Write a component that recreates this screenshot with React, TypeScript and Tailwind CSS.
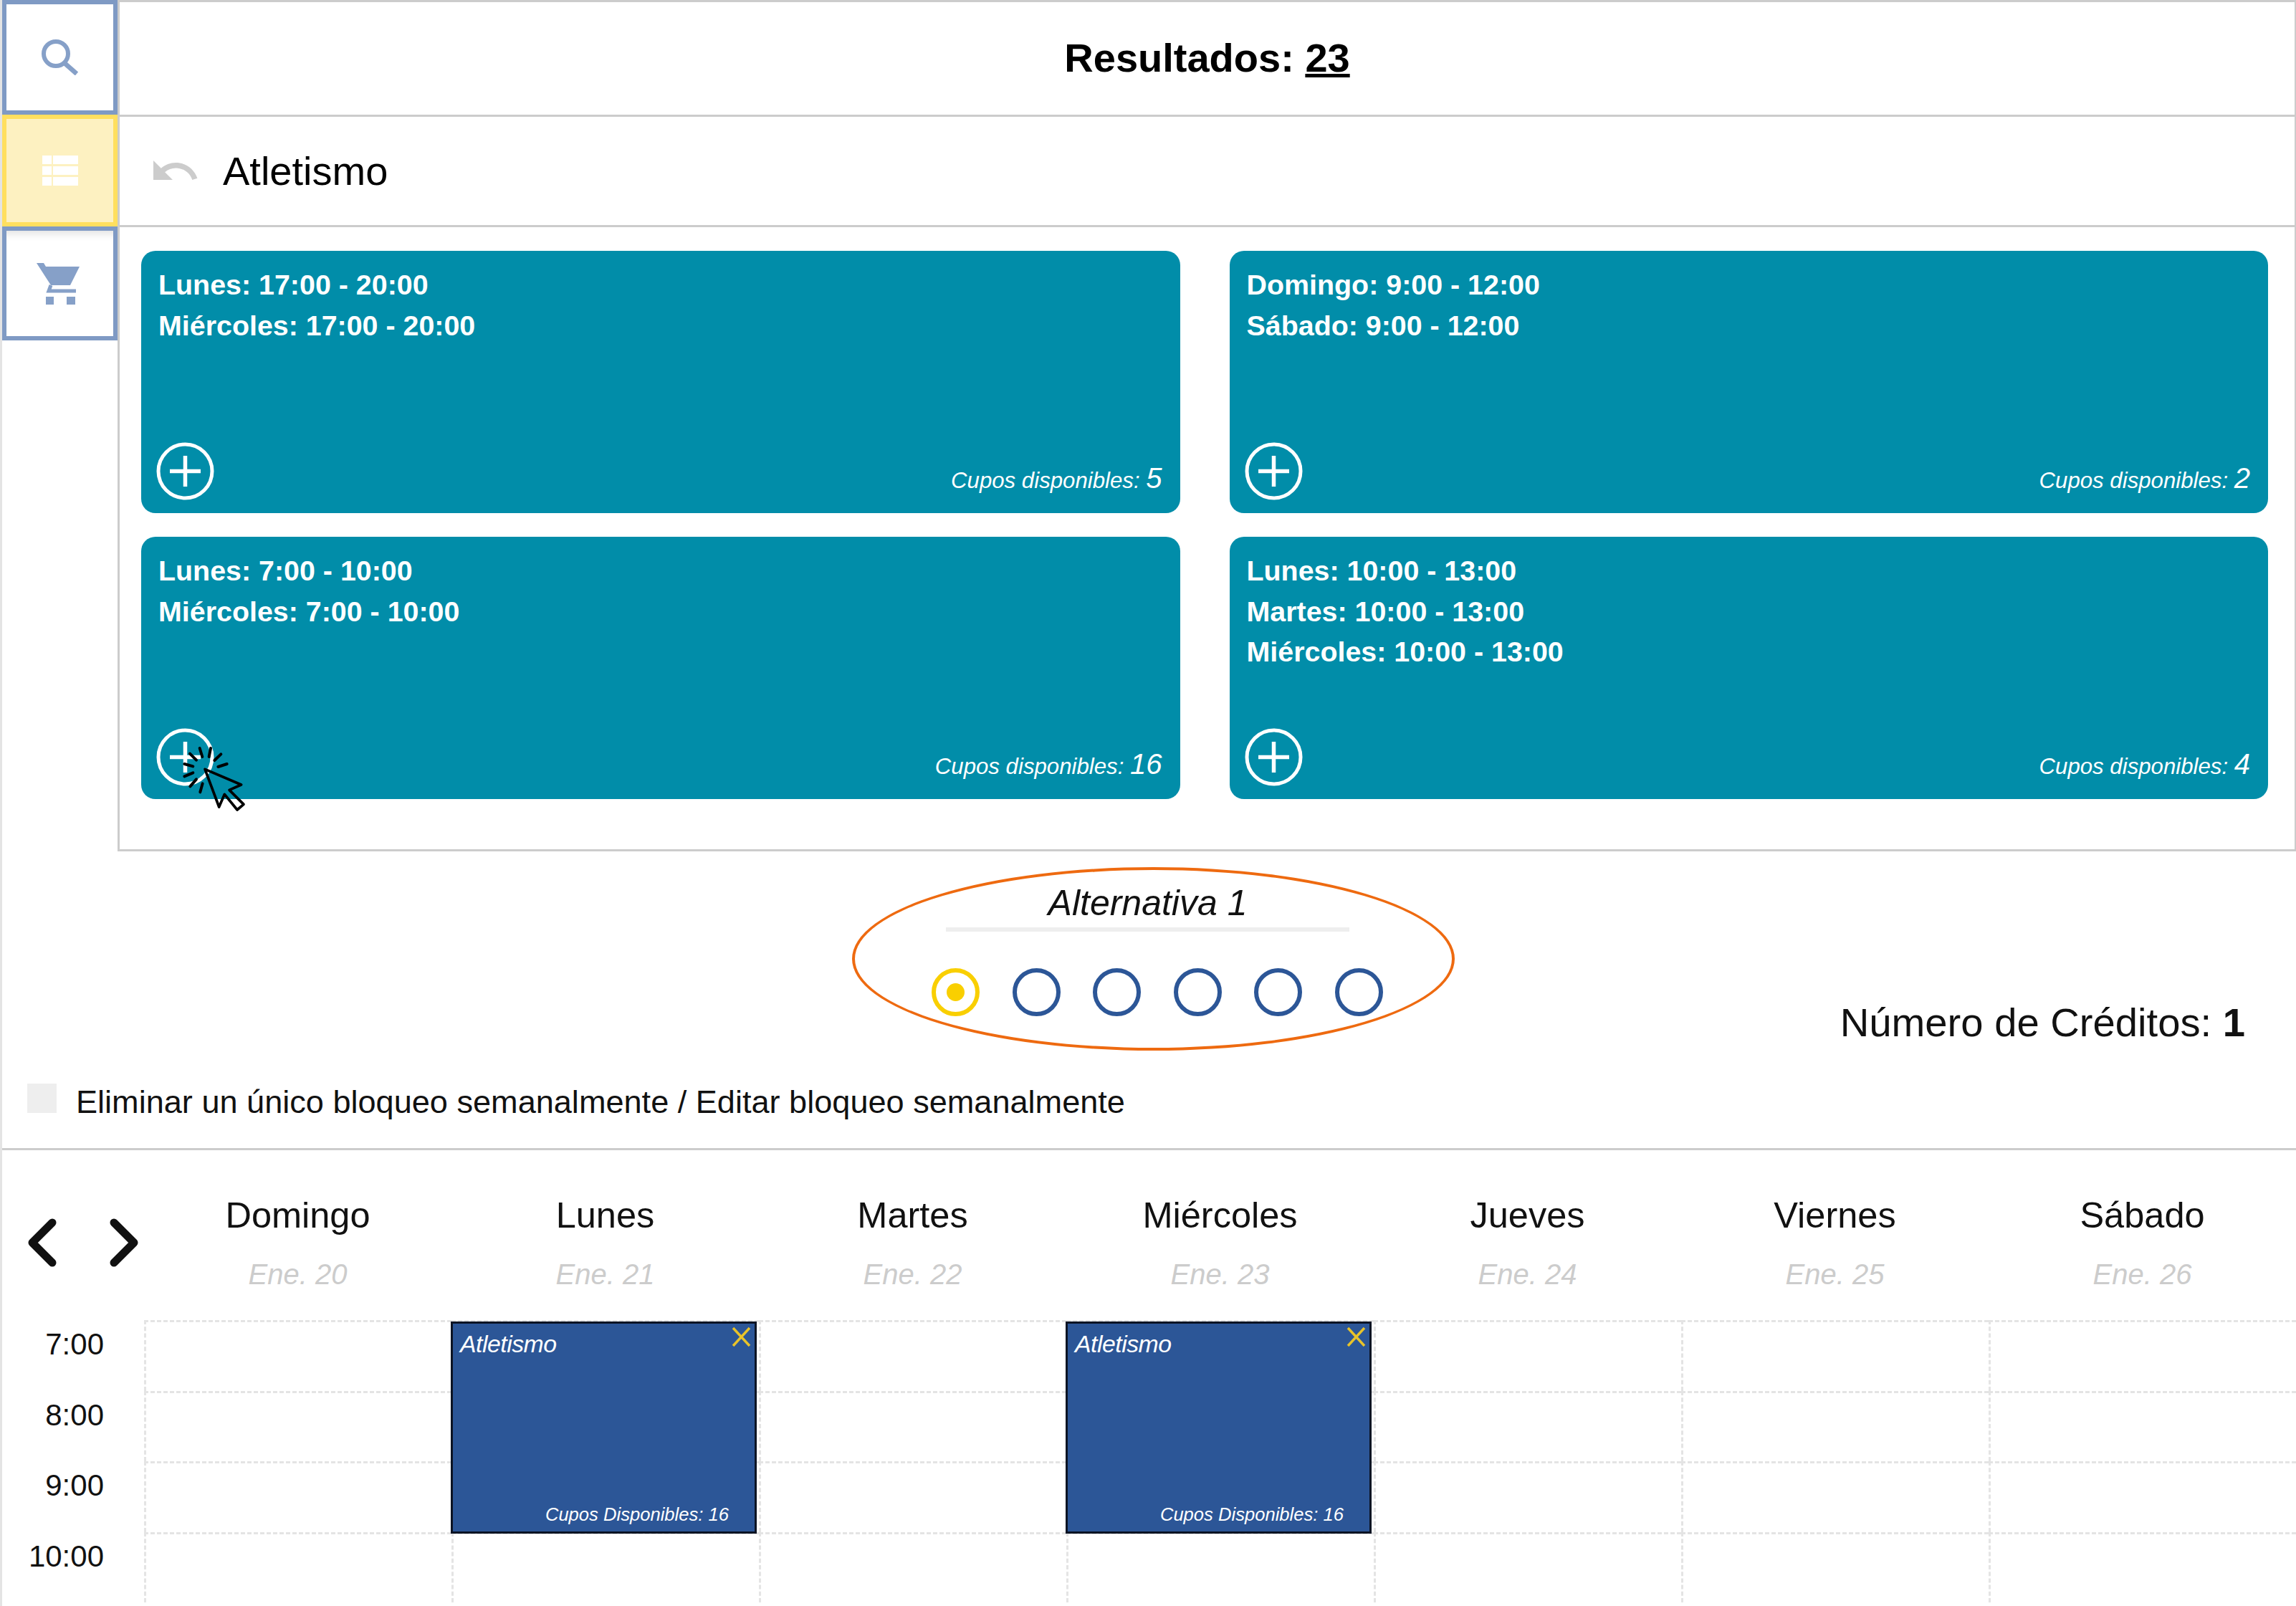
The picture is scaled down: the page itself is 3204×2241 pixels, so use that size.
import React from "react";
import { MdUndo } from "react-icons/md";

const cards = [
  { lines: ["Lunes: 17:00 - 20:00", "Miércoles: 17:00 - 20:00"], n: 5 },
  { lines: ["Domingo: 9:00 - 12:00", "Sábado: 9:00 - 12:00"], n: 2 },
  { lines: ["Lunes: 7:00 - 10:00", "Miércoles: 7:00 - 10:00"], n: 16 },
  { lines: ["Lunes: 10:00 - 13:00", "Martes: 10:00 - 13:00", "Miércoles: 10:00 - 13:00"], n: 4 },
];
const days = [
  ["Domingo", "Ene. 20"],
  ["Lunes", "Ene. 21"],
  ["Martes", "Ene. 22"],
  ["Miércoles", "Ene. 23"],
  ["Jueves", "Ene. 24"],
  ["Viernes", "Ene. 25"],
  ["Sábado", "Ene. 26"],
];
const hours = ["7:00", "8:00", "9:00", "10:00"];

function Card({ lines, n }: { lines: string[]; n: number }) {
  return (
    <div className="h-[366px] rounded-[20px] bg-[#018da9] text-white flex flex-col justify-between pt-[19px] pl-[21px] pr-[25px] pb-[18px]">
      <div className="pl-[3px] font-bold text-[39.4px] leading-[56.5px]">
        {lines.map((l) => (
          <div key={l}>{l}</div>
        ))}
      </div>
      <div className="flex items-end justify-between">
        <svg width="81" height="81" viewBox="0 0 81 81" fill="none" stroke="#fff">
          <circle cx="40.5" cy="40.5" r="37.5" strokeWidth="5" />
          <path d="M19 40.5h43M40.5 19v43" strokeWidth="5.5" />
        </svg>
        <div className="italic text-[31.2px] leading-[40px] mb-[7px]">
          Cupos disponibles: <span className="text-[40px]">{n}</span>
        </div>
      </div>
    </div>
  );
}

function Radio({ on }: { on?: boolean }) {
  return (
    <div
      className={
        on
          ? "w-[67px] h-[67px] rounded-full border-[6px] border-[#f9cf00] flex items-center justify-center"
          : "w-[67px] h-[67px] rounded-full border-[6px] border-[#2c5697]"
      }
    >
      {on && <div className="w-[25px] h-[25px] rounded-full bg-[#f9cf00]" />}
    </div>
  );
}

function Event() {
  return (
    <div className="absolute z-10 left-[-4px] top-[-1px] w-[427px] h-[296px] bg-[#2c5697] border-[3px] border-[#0c1424] text-white italic">
      <div className="absolute left-[10px] top-[8px] text-[33.8px] leading-[40px] tracking-[-0.5px]">Atletismo</div>
      <svg className="absolute right-[5px] top-[5px]" width="27" height="27" viewBox="0 0 27 27" stroke="#e8c32a" strokeWidth="3.5" fill="none">
        <path d="M2 1l23 25M25 1L2 26" />
      </svg>
      <div className="absolute right-[36px] bottom-[9px] text-[25.6px] leading-[30px]">Cupos Disponibles: 16</div>
    </div>
  );
}

export default function App() {
  return (
    <div className="relative w-[3204px] h-[2241px] overflow-hidden bg-white border-l-[3px] border-[#e4e4e4] font-['Liberation_Sans',Arial,sans-serif] text-[#111]">
      {/* Top: rail + results */}
      <div className="flex h-[1188px]">
        <div className="w-[161px] shrink-0 flex flex-col">
          <div className="h-[160px] border-[6px] border-[#7f9ac4] flex items-center justify-center">
            <svg width="52" height="50" viewBox="0 0 52 50" fill="none" stroke="#86a0c8" strokeWidth="6">
              <circle cx="20" cy="20" r="17" />
              <path d="M32 33l17 15" strokeWidth="6.5" />
            </svg>
          </div>
          <div className="h-[156px] border-[6px] border-[#ffdf5f] bg-[#fdf1c1] flex items-center justify-center">
            <svg width="50" height="42" viewBox="0 0 50 42" fill="#fff">
              <path d="M0 0h13v12H0zM15 0h35v12H15zM0 15h13v12H0zM15 15h35v12H15zM0 30h13v12H0zM15 30h35v12H15z" />
            </svg>
          </div>
          <div className="h-[159px] border-[6px] border-[#7f9ac4] flex items-center justify-center pr-[5px] shadow-[inset_0_12px_12px_-8px_rgba(0,0,0,0.12)]">
            <svg width="60" height="58" viewBox="0 0 60 58" fill="#86a0c8">
              <path d="M0 0h10l3 5h47L47 31H20z" />
              <path d="M20 31l-3 8h38" fill="none" stroke="#86a0c8" strokeWidth="5" />
              <path d="M13 47h11v11H13zM42 47h12v11H42z" />
            </svg>
          </div>
        </div>
        <div className="flex-1 flex flex-col border-t-[3px] border-l-[3px] border-r-2 border-b-[3px] border-[#ccc]">
          <div className="h-[160px] shrink-0 border-b-[3px] border-[#ccc] flex items-center justify-center font-bold text-[56px] text-black pb-[2px]">
            <span>
              Resultados: <span className="underline">23</span>
            </span>
          </div>
          <div className="h-[154px] shrink-0 border-b-[3px] border-[#ccc] flex items-center pl-[41px] gap-[31px] text-[56px]">
            <MdUndo size={72} className="text-[#ccc]" />
            <span className="text-black">Atletismo</span>
          </div>
          <div className="grid grid-cols-2 gap-x-[69px] gap-y-[33px] pt-[33px] pl-[30px] pr-[37px]">
            {cards.map((c) => (
              <Card key={c.lines[0]} {...c} />
            ))}
          </div>
        </div>
      </div>

      {/* Alternatives */}
      <div className="relative h-[417px] border-b-[3px] border-[#ccc]">
        <div className="absolute left-[1186px] top-[22px] w-[841px] h-[256px] rounded-[50%] border-[4px] border-[#ee6a10]" />
        <div className="flex flex-col items-center pt-[42px] pr-[4px]">
          <div className="italic text-[50px] leading-[60px]">Alternativa 1</div>
          <div className="w-[563px] h-[6px] bg-[#eee] mt-[4px]" />
        </div>
        <div className="flex items-end pl-[1297px] pr-[71px] mt-[51px]">
          <div className="flex gap-[45.6px]">
            <Radio on />
            <Radio />
            <Radio />
            <Radio />
            <Radio />
            <Radio />
          </div>
          <div className="ml-auto text-[56.2px] leading-[64px] mb-[-41px]">
            Número de Créditos: <b>1</b>
          </div>
        </div>
        <div className="flex items-center pl-[35px] gap-[27px] mt-[93px]">
          <div className="w-[41px] h-[41px] bg-[#eee] mt-[-12px]" />
          <span className="text-[45.1px] leading-[54px]">Eliminar un único bloqueo semanalmente / Editar bloqueo semanalmente</span>
        </div>
      </div>

      {/* Calendar */}
      <div className="grid grid-cols-[198px_repeat(7,1fr)] h-[237px]">
        <div className="flex items-start gap-[72px] pl-[35px] pt-[95px]">
          <svg width="42" height="68" viewBox="0 0 42 68" fill="none" stroke="#111" strokeWidth="11" strokeLinecap="round" strokeLinejoin="round">
            <path d="M35 6L7 34l28 28" />
          </svg>
          <svg width="42" height="68" viewBox="0 0 42 68" fill="none" stroke="#111" strokeWidth="11" strokeLinecap="round" strokeLinejoin="round">
            <path d="M7 6l28 28L7 62" />
          </svg>
        </div>
        {days.map(([d, e]) => (
          <div key={d} className="flex flex-col items-center pt-[61px]">
            <div className="text-[50.5px] leading-[60px]">{d}</div>
            <div className="italic text-[40px] leading-[48px] text-[#ccc] mt-[28px]">{e}</div>
          </div>
        ))}
      </div>
      <div className="grid grid-cols-[198px_repeat(7,1fr)] auto-rows-[98.5px]">
        {hours.map((h, r) => (
          <React.Fragment key={h}>
            <div className="text-right pr-[56px] pt-[10px] text-[42px] leading-[48px]">{h}</div>
            {days.map(([d], c) => (
              <div key={d} className="relative border-t-[3px] border-l-[3px] border-dashed border-[#e4e4e4]">
                {r === 0 && (c === 1 || c === 3) && <Event />}
              </div>
            ))}
          </React.Fragment>
        ))}
      </div>

      <svg className="absolute left-[147px] top-[950px] z-20" width="300" height="220" viewBox="0 0 900 660" fill="none" strokeLinecap="round" strokeLinejoin="round">
        <path d="M408 370L560 435 510 457 570 517 543 540 490 475 467 528Z" stroke="#000" strokeWidth="11" />
        <path
          d="M345 305L372 332M386 282L397 318M432 282L425 318M475 307L448 333M500 348L463 360M358 358L322 348M358 385L322 400M372 412L346 442M398 430L388 466"
          stroke="#000"
          strokeWidth="12"
        />
      </svg>
    </div>
  );
}
